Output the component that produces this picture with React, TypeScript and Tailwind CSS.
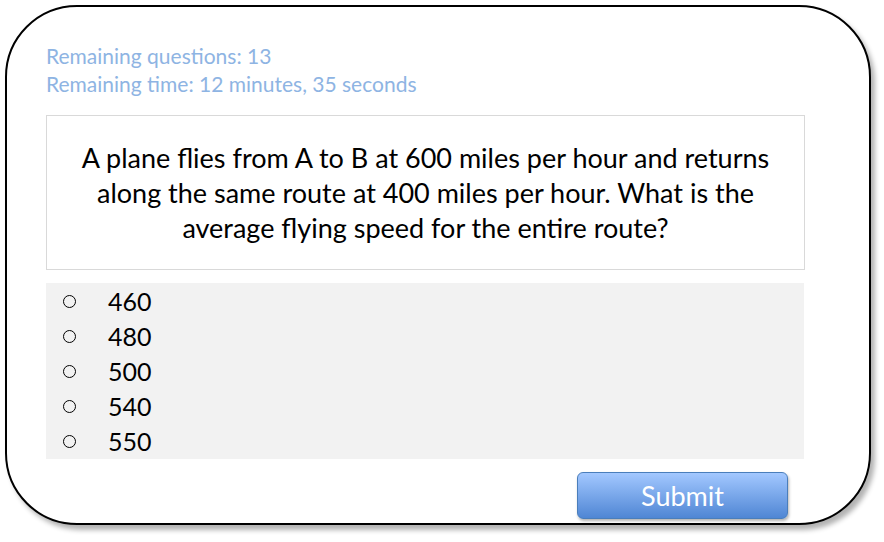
import { useState } from "react";

const options = ["460", "480", "500", "540", "550"];

export default function App() {
  const [picked, setPicked] = useState<string | null>(null);

  return (
    <div className="w-[884px] h-[542px] bg-white pl-[5px] pt-[5px] font-['Lato',sans-serif]">
      <div className="w-[866px] h-[520px] border-2 border-black rounded-[72px] bg-white shadow-[4px_5px_5px_rgba(0,0,0,0.3)] pl-[39px] pt-[35px]">
        <div className="text-[21px] leading-[28px] text-[#8eb4e3]">
          <p>Remaining questions: 13</p>
          <p>Remaining time: 12 minutes, 35 seconds</p>
        </div>

        <div className="mt-[17px] w-[759px] h-[155px] border border-[#d9d9d9] flex items-center justify-center">
          <p className="text-[27px] leading-[35px] text-black text-center">
            A plane flies from A to B at 600 miles per hour and returns
            <br />
            along the same route at 400 miles per hour. What is the
            <br />
            average flying speed for the entire route?
          </p>
        </div>

        <ul className="mt-[13px] w-[758px] h-[176px] bg-[#f2f2f2] pt-[1px]">
          {options.map((o) => (
            <li
              key={o}
              onClick={() => setPicked(o)}
              className="flex items-center h-[35px] cursor-pointer"
            >
              <span className="w-[62px] pl-[17px] flex items-center">
                <span
                  className={
                    picked === o
                      ? "w-[13px] h-[13px] rounded-full border border-black bg-black"
                      : "w-[13px] h-[13px] rounded-full border border-black"
                  }
                />
              </span>
              <span className="text-[25px] text-black">{o}</span>
            </li>
          ))}
        </ul>

        <div className="flex w-[742px] justify-end mt-[13px]">
          <button className="w-[211px] h-[47px] rounded-[6px] border border-[#4a7ebb] bg-gradient-to-b from-[#a3c8ff] to-[#4f86d4] text-white text-[27px] leading-none shadow-[1px_2px_3px_rgba(0,0,0,0.3)]">
            Submit
          </button>
        </div>
      </div>
    </div>
  );
}
